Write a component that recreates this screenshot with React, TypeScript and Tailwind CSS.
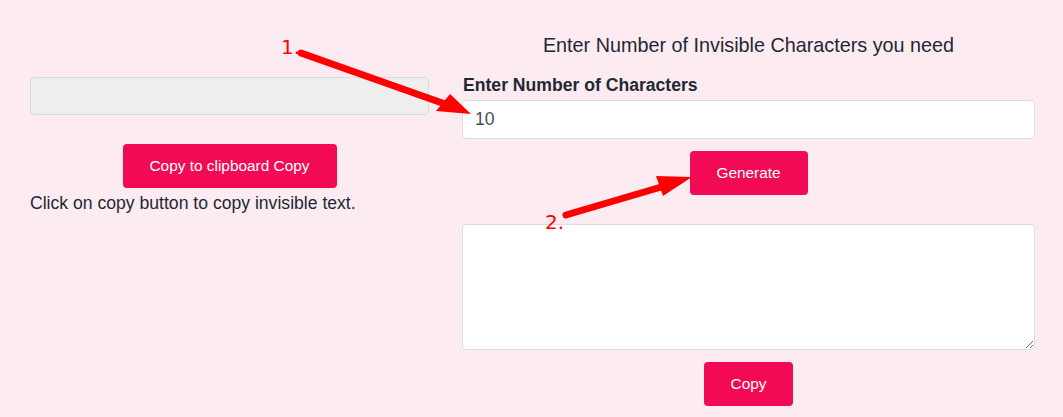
import React from "react";

export default function App() {
  const font = { fontFamily: '"Liberation Sans", Arial, sans-serif' };
  return (
    <div
      className="relative h-[417px] w-[1063px] overflow-hidden bg-[#fdebf2] text-[#212529]"
      style={font}
    >
      <div className="flex gap-[33px] pl-[30px] pr-[28px]">
        {/* Left column */}
        <div className="flex w-[399px] flex-col pt-[77px]">
          <input
            readOnly
            className="h-[38px] w-full rounded-[4px] border border-[#dadbdf] bg-[#eeeeee] px-3 outline-none"
          />
          <div className="mt-[29px] flex justify-center">
            <button className="h-[44px] w-[214px] rounded-[4px] bg-[#f20a54] text-[15.4px] text-white">
              Copy to clipboard Copy
            </button>
          </div>
          <p className="mt-[2px] text-[17.6px] leading-[26.4px] text-[#222833]">
            Click on copy button to copy invisible text.
          </p>
        </div>

        {/* Right column */}
        <div className="flex flex-1 flex-col pt-[34px]">
          <h2 className="text-center text-[19.8px] leading-[23.8px] text-[#222833]">
            Enter Number of Invisible Characters you need
          </h2>
          <label className="mt-[14.6px] pl-[1px] text-[17.6px] font-bold leading-[26.4px] text-[#222833]">
            Enter Number of Characters
          </label>
          <input
            readOnly
            value="10"
            className="mt-[1px] h-[39px] w-full rounded-[4px] border border-[#dcdde2] bg-white px-[12px] text-[17.6px] text-[#495057] outline-none"
          />
          <div className="mt-[12px] flex justify-center">
            <button className="h-[44px] w-[118px] rounded-[4px] bg-[#f20a54] text-[15.4px] text-white">
              Generate
            </button>
          </div>
          <textarea
            readOnly
            className="mt-[29px] h-[126px] w-full rounded-[4px] border border-[#dcdde2] bg-white outline-none"
          />
          <div className="mt-[12px] flex justify-center">
            <button className="h-[44px] w-[89px] rounded-[4px] bg-[#f20a54] text-[15.4px] text-white">
              Copy
            </button>
          </div>
        </div>
      </div>

      {/* Annotation overlay */}
      <svg
        className="pointer-events-none absolute left-0 top-0"
        width="1063"
        height="417"
        viewBox="0 0 1063 417"
      >
        <line x1="301" y1="53" x2="445" y2="104" stroke="#ff0000" strokeWidth="7" strokeLinecap="round" />
        <polygon points="471,114 436,111 450,94" fill="#ff0000" />
        <line x1="566" y1="215" x2="668" y2="185" stroke="#ff0000" strokeWidth="7" strokeLinecap="round" />
        <polygon points="692,177 663,196 656,176" fill="#ff0000" />
      </svg>
      <span
        className="absolute left-[281px] top-[35px] text-[20px] leading-[24px] text-[#ff0000]"
        style={{ fontFamily: '"DejaVu Sans", sans-serif' }}
      >
        1.
      </span>
      <span
        className="absolute left-[545px] top-[210px] text-[20px] leading-[24px] text-[#ff0000]"
        style={{ fontFamily: '"DejaVu Sans", sans-serif' }}
      >
        2.
      </span>
    </div>
  );
}
